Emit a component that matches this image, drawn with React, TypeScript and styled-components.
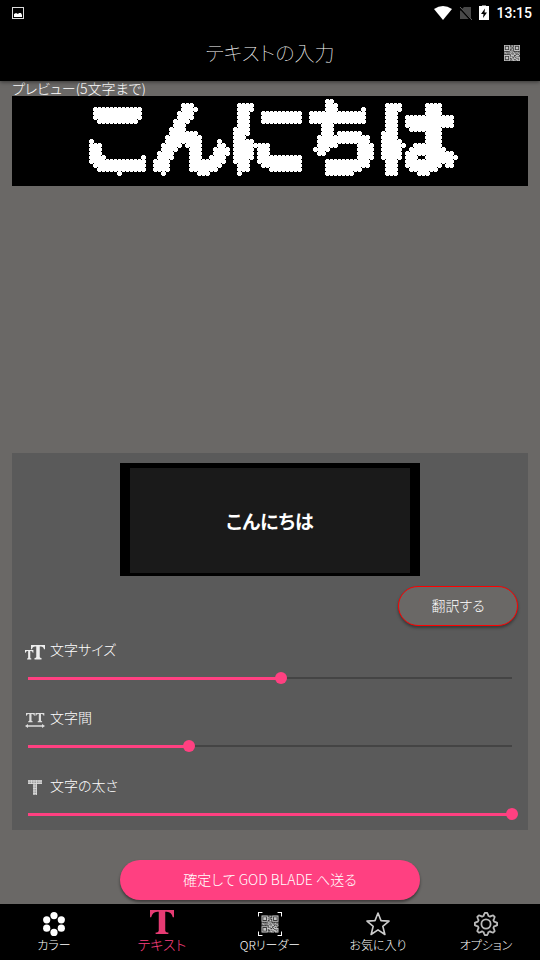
import React, { useState } from "react";
import styled, { createGlobalStyle } from "styled-components";

const PINK = "#ff4081";

const GlobalStyle = createGlobalStyle`
  *, *::before, *::after { box-sizing: border-box; }
  body {
    margin: 0;
    background: #000;
    color: #fff;
    font-family: "Noto Sans CJK JP", sans-serif;
    font-weight: 300;
    font-feature-settings: "palt";
  }
  button, input { font: inherit; font-feature-settings: inherit; color: inherit; }
`;

const Screen = styled.div`
  min-height: 100vh;
  display: flex;
  flex-direction: column;
`;

const StatusBar = styled.div`
  height: 25px;
  padding: 0 8px 0 12px;
  display: flex;
  align-items: center;
  background: #000;
`;

const StatusIcons = styled.div`
  margin-left: auto;
  display: flex;
  align-items: center;
  gap: 7px;
`;

const Clock = styled.time`
  font-family: Roboto, sans-serif;
  font-size: 14px;
  line-height: 16px;
  font-weight: 500;
`;

const Header = styled.header`
  height: 56px;
  padding: 0 16px;
  display: grid;
  grid-template-columns: 24px 1fr 24px;
  align-items: center;
  background: #000;
  box-shadow: 0 1px 4px rgba(0, 0, 0, 0.5);
  z-index: 1;
`;

const Title = styled.h1`
  grid-column: 2;
  margin: 0;
  text-align: center;
  font-size: 20px;
  line-height: 28px;
  font-weight: 100;
`;

const IconButton = styled.button`
  width: 24px;
  height: 24px;
  padding: 0;
  border: 0;
  background: none;
  display: grid;
  place-items: center;
`;

const Main = styled.main`
  flex: 1;
  padding: 0 12px 4px;
  display: flex;
  flex-direction: column;
  background: #6a6866;
`;

const PreviewTitle = styled.h2`
  margin: 0;
  font-size: 14px;
  line-height: 15px;
  font-weight: 300;
`;

const LedPreview = styled.div`
  height: 90px;
  background: #000;
  display: flex;
  justify-content: center;
  overflow: hidden;
`;

const LedText = styled.text`
  font-family: "Noto Sans CJK JP", sans-serif;
  font-size: 81px;
  font-weight: 700;
  fill: #fff;
  stroke: #fff;
  stroke-width: 3px;
  stroke-linejoin: round;
`;

const Spacer = styled.div`
  flex: 1;
  min-height: 16px;
`;

const Panel = styled.section`
  padding: 10px 10px 2px;
  display: flex;
  flex-direction: column;
  align-items: center;
  background: #5a5a5a;
`;

const Sample = styled.div`
  width: 100%;
  max-width: 300px;
  height: 113px;
  border: solid #000;
  border-width: 5px 10px 3px;
  background: #1a1a1a;
  display: grid;
  place-items: center;
  font-size: 19px;
  font-weight: 700;
`;

const TranslateButton = styled.button`
  align-self: flex-end;
  width: 120px;
  height: 40px;
  margin: 10px 0;
  padding: 0 0 2px;
  border: 1px solid #f00;
  border-radius: 20px;
  background: #6a6866;
  box-shadow: 0 2px 3px rgba(0, 0, 0, 0.35);
  font-size: 14px;
`;

const SliderRow = styled.div`
  width: 100%;
  height: 68px;
  &:last-child { height: 56px; }
`;

const SliderLabel = styled.label`
  height: 26px;
  padding-left: 3px;
  display: flex;
  align-items: center;
  gap: 5px;
  font-size: 14px;
  line-height: 20px;
  svg { align-self: flex-end; }
`;

const Range = styled.input`
  appearance: none;
  display: block;
  width: 100%;
  height: 28px;
  margin: 2px 0 0;
  background:
    linear-gradient(90deg, transparent 6px, ${PINK} 6px calc(6px + (100% - 12px) * var(--filled)), transparent 0) center / 100% 3px no-repeat,
    linear-gradient(90deg, transparent 6px, #444 6px calc(100% - 6px), transparent 0) center / 100% 2px no-repeat;
  &::-webkit-slider-thumb {
    appearance: none;
    width: 12px;
    height: 12px;
    border-radius: 50%;
    background: ${PINK};
  }
`;

const SendButton = styled.button`
  align-self: center;
  width: 100%;
  max-width: 300px;
  height: 40px;
  margin-top: 30px;
  padding: 0 0 2px;
  border: 0;
  border-radius: 20px;
  background: ${PINK};
  box-shadow: 0 2px 3px rgba(0, 0, 0, 0.45);
  font-size: 14px;
`;

const TabBar = styled.nav`
  height: 56px;
  display: grid;
  grid-template-columns: repeat(5, 1fr);
  background: #000;
`;

const Tab = styled.button<{ $active?: boolean }>`
  padding: ${(p) => (p.$active ? "6px 0 8px" : "8px 0 7px")};
  border: 0;
  background: none;
  color: ${(p) => (p.$active ? PINK : "#fff")};
  display: flex;
  flex-direction: column;
  align-items: center;
  justify-content: space-between;
  font-size: ${(p) => (p.$active ? "14px" : "12px")};
  line-height: 16px;
`;

const QR_ROWS = [
  "1111111010101111111",
  "1000001001101000001",
  "1011101110001011101",
  "1011101010111011101",
  "1011101101001011101",
  "1000001001101000001",
  "1111111010101111111",
  "0000000110100000000",
  "1101011011110101101",
  "0110100110011011010",
  "1011011101101100111",
  "0000000011011101001",
  "1111111011110011110",
  "1000001010110110100",
  "1011101111001011111",
  "1011101011111100101",
  "1011101000101111011",
  "1000001101110011101",
  "1111111010111101111",
];

function QrCode({ size, framed = false }: { size: number; framed?: boolean }) {
  return (
    <svg width={size} height={size} viewBox={framed ? "-4 -4 27 27" : "0 0 19 19"} aria-hidden="true">
      <rect width="19" height="19" fill="#383838" />
      <path
        fill="#c4c4c4"
        d={QR_ROWS.map((row, y) =>
          [...row].map((m, x) => (m === "1" ? `M${x} ${y}h1v1h-1z` : "")).join("")
        ).join("")}
      />
      {framed && (
        <path d="M-3.5 1v-4.500H1M18-3.5h4.500V1M22.500 18v4.500H18M1 22.500h-4.500V18" fill="none" stroke="#fff" strokeWidth="1.200" />
      )}
    </svg>
  );
}

const PictureIcon = () => (
  <svg width="12" height="12" viewBox="0 0 12 12" aria-hidden="true">
    <rect x=".5" y=".5" width="11" height="11" fill="none" stroke="#ddd" />
    <path d="M2 10V7l2-1 2 1 1-1h2l1 2v2z" fill="#fff" />
  </svg>
);

const WifiIcon = () => (
  <svg width="18" height="14" viewBox="0 0 18 14" aria-hidden="true">
    <path d="M0 3Q9-3 18 3L9 14z" fill="#fff" />
  </svg>
);

const NoSimIcon = () => (
  <svg width="13" height="14" viewBox="0 0 13 14" aria-hidden="true">
    <path d="M5 1h7v12H1V5z" fill="#484848" />
    <path d="M0 1l12 13" stroke="#000" strokeWidth="2" />
    <path d="M1 1l12 13" stroke="#666" />
  </svg>
);

const BatteryIcon = () => (
  <svg width="10" height="15" viewBox="0 0 10 15" aria-hidden="true">
    <path d="M3 0h4v1H3z" fill="#888" />
    <path d="M0 1h10v14H0z" fill="#fff" />
    <path d="M6 3.500L2 9h2.500L4 13l4-5.500H5.500z" fill="#000" />
  </svg>
);

const SERIF_T = "M0 0h20v6h-1.500Q18 2 14 2h-1.500v14.500q0 1.500 2.500 1.500v2H5v-2q2.500 0 2.500-1.500V2H6Q2 2 1.500 6H0z";

const TextSizeIcon = () => (
  <svg width="20" height="20" viewBox="0 0 20 20" fill="#eee" aria-hidden="true">
    <path d={SERIF_T} transform="translate(6 3) scale(.7 .72)" />
    <path d={SERIF_T} transform="translate(0 8) scale(.42 .47)" />
  </svg>
);

const TextSpacingIcon = () => (
  <svg width="20" height="20" viewBox="0 0 20 20" fill="#ddd" aria-hidden="true">
    <path d={SERIF_T} transform="translate(1 3) scale(.44 .46)" />
    <path d={SERIF_T} transform="translate(10.5 3) scale(.44 .46)" />
    <path d="M0 16l3-2v1.300h14V14l3 2-3 2v-1.300H3V18z" />
  </svg>
);

const TextWeightIcon = () => (
  <svg width="20" height="20" viewBox="0 0 20 20" aria-hidden="true">
    <path d="M3 2h14v4h-5v11H8V6H3z" fill="#a0a0a0" />
    <path d="M3 3h14M3 5.500h14M8 8h4M8 10.500h4M8 13h4M8 15.500h4M4 2v4M6.500 2v4M9 2v15M11.500 2v15M14 2v4M16 2v4" stroke="#dcdcdc" strokeWidth=".8" />
  </svg>
);

const ColorIcon = () => (
  <svg width="24" height="24" viewBox="0 0 24 24" fill="#fff" aria-hidden="true">
    {[[12, 3.6], [19.3, 7.8], [19.3, 16.2], [12, 20.4], [4.7, 16.2], [4.7, 7.8]].map(([x, y]) => (
      <circle key={`${x} ${y}`} cx={x} cy={y} r="3.600" />
    ))}
  </svg>
);

const BigTextIcon = () => (
  <svg width="24" height="24" viewBox="0 0 20 20" preserveAspectRatio="none" fill="#e63b73" aria-hidden="true">
    <path d="M0 0h20v6h-1Q18 1.800 14 1.500h-1.300v15.500q0 1.500 2.600 1.800V20H4.700v-1.200q2.600-.3 2.600-1.800V1.500H6Q2 1.800 1 6H0z" />
  </svg>
);

const StarIcon = () => (
  <svg width="24" height="24" viewBox="0 0 24 24" fill="none" stroke="#ccc" strokeWidth="1.600" strokeLinejoin="round" aria-hidden="true">
    <path d="M12 1l3 7.600 8 .5-6.200 5.200 2.100 8.200-6.900-4.600-6.900 4.600 2.100-8.200L1 9.100l8-.5z" />
  </svg>
);

const GEAR = Array.from({ length: 64 }, (_, i) => {
  const a = (i / 64) * Math.PI * 2;
  const r = 9.8 + 1.4 * Math.max(-1, Math.min(1, 1.6 * Math.cos(a * 8)));
  return `${(12 + r * Math.cos(a)).toFixed(2)},${(12 + r * Math.sin(a)).toFixed(2)}`;
}).join(" ");

const GearIcon = () => (
  <svg width="24" height="24" viewBox="0 0 24 24" fill="none" stroke="#bbb" strokeWidth="1.800" strokeLinejoin="round" aria-hidden="true">
    <polygon points={GEAR} />
    <circle cx="12" cy="12" r="4.600" />
  </svg>
);

/* Samples the text on a 4px grid and grows every hit into a round lamp. */
function LedMatrix({ text }: { text: string }) {
  return (
    <svg width="400" height="90" viewBox="0 0 400 90">
      <defs>
        <filter id="led-dots" filterUnits="userSpaceOnUse" x="0" y="0" width="400" height="90" colorInterpolationFilters="sRGB">
          <feFlood x="1" y="1" width="1" height="1" floodColor="#fff" result="dot" />
          <feOffset in="dot" x="0" y="0" width="4" height="4" dx="0" dy="0" />
          <feTile result="grid" />
          <feComponentTransfer in="SourceGraphic" result="solid">
            <feFuncA type="discrete" tableValues="0 1" />
          </feComponentTransfer>
          <feComposite in="grid" in2="solid" operator="in" result="hits" />
          <feConvolveMatrix
            in="hits"
            order="5"
            divisor="1"
            preserveAlpha="false"
            kernelMatrix="0 1 1 1 0  1 1 1 1 1  1 1 1 1 1  1 1 1 1 1  0 1 1 1 0"
            result="lamps"
          />
          <feMorphology in="hits" operator="dilate" radius="2" />
          <feMorphology operator="erode" radius="1" result="core" />
          <feMerge>
            <feMergeNode in="lamps" />
            <feMergeNode in="core" />
          </feMerge>
        </filter>
      </defs>
      <LedText x="200" y="72" textAnchor="middle" filter="url(#led-dots)">
        {text}
      </LedText>
    </svg>
  );
}

interface SliderProps {
  id: string;
  label: string;
  icon: React.ReactNode;
  initial: number;
}

function Slider({ id, label, icon, initial }: SliderProps) {
  const [value, setValue] = useState(initial);
  return (
    <SliderRow>
      <SliderLabel htmlFor={id}>
        {icon}
        {label}
      </SliderLabel>
      <Range
        id={id}
        type="range"
        min={0}
        max={1000}
        value={value}
        onChange={(e) => setValue(Number(e.target.value))}
        style={{ "--filled": value / 1000 } as React.CSSProperties}
      />
    </SliderRow>
  );
}

export default function App() {
  const message = "こんにちは";
  return (
    <Screen>
      <GlobalStyle />
      <StatusBar>
        <PictureIcon />
        <StatusIcons>
          <WifiIcon />
          <NoSimIcon />
          <BatteryIcon />
          <Clock>13:15</Clock>
        </StatusIcons>
      </StatusBar>
      <Header>
        <Title>テキストの入力</Title>
        <IconButton type="button" aria-label="QR">
          <QrCode size={16} />
        </IconButton>
      </Header>
      <Main>
        <PreviewTitle>プレビュー(5文字まで)</PreviewTitle>
        <LedPreview>
          <LedMatrix text={message} />
        </LedPreview>
        <Spacer />
        <Panel>
          <Sample>{message}</Sample>
          <TranslateButton type="button">翻訳する</TranslateButton>
          <Slider id="size" label="文字サイズ" icon={<TextSizeIcon />} initial={523} />
          <Slider id="spacing" label="文字間" icon={<TextSpacingIcon />} initial={333} />
          <Slider id="weight" label="文字の太さ" icon={<TextWeightIcon />} initial={1000} />
        </Panel>
        <SendButton type="button">確定して GOD BLADE へ送る</SendButton>
      </Main>
      <TabBar>
        <Tab type="button"><ColorIcon />カラー</Tab>
        <Tab type="button" $active aria-current="page"><BigTextIcon />テキスト</Tab>
        <Tab type="button"><QrCode size={24} framed />QRリーダー</Tab>
        <Tab type="button"><StarIcon />お気に入り</Tab>
        <Tab type="button"><GearIcon />オプション</Tab>
      </TabBar>
    </Screen>
  );
}
